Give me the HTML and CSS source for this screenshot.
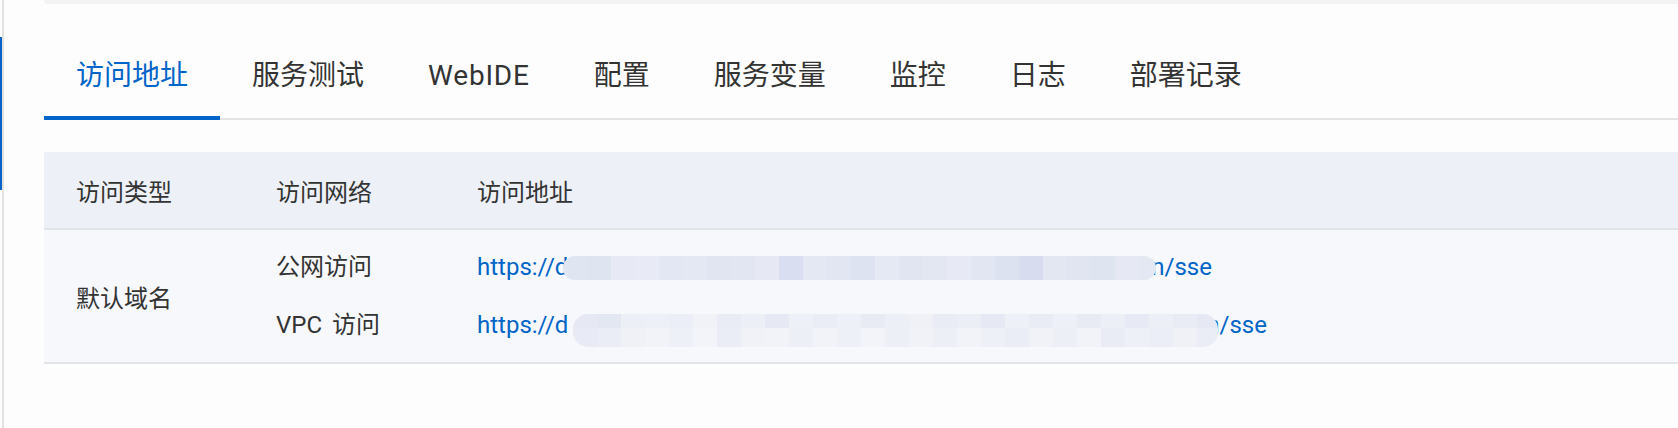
FILE: index.html
```html
<!DOCTYPE html>
<html lang="zh-CN">
<head>
<meta charset="utf-8">
<title>访问地址</title>
<link rel="stylesheet" href="styles.css">
</head>
<body>
<div class="page">
  <div class="rail"><div class="rail-indicator"></div></div>
  <div class="main">
    <div class="top-card"></div>
    <nav class="tabs">
      <div class="tab active">访问地址</div>
      <div class="tab">服务测试</div>
      <div class="tab tab-latin">WebIDE</div>
      <div class="tab">配置</div>
      <div class="tab">服务变量</div>
      <div class="tab">监控</div>
      <div class="tab">日志</div>
      <div class="tab">部署记录</div>
    </nav>
    <div class="table">
      <div class="row head">
        <div class="cell">访问类型</div>
        <div class="cell">访问网络</div>
        <div class="cell">访问地址</div>
      </div>
      <div class="row body">
        <div class="cell type">默认域名</div>
        <div class="cell lines">
          <div class="line">公网访问</div>
          <div class="line vpc">VPC 访问</div>
        </div>
        <div class="cell lines">
          <div class="line link">https://d<span class="mask mask-one"></span>n/sse</div>
          <div class="line link">https://d<span class="mask mask-two"></span>n/sse</div>
        </div>
      </div>
    </div>
  </div>
</div>
</body>
</html>
```

FILE: styles.css
```css
* { box-sizing: border-box; }
html, body {
  margin: 0;
  padding: 0;
  background: #fdfdfd;
  font-family: Roboto, "Noto Sans CJK SC", sans-serif;
  color: #333333;
}
.page {
  display: flex;
  min-height: 428px;
}
.rail {
  flex: none;
  width: 4px;
  border-right: 2px solid #e2e2e2;
}
.rail-indicator {
  margin-top: 37px;
  width: 2px;
  height: 153px;
  background: #0a64c8;
}
.main {
  flex: 1;
  min-width: 0;
  padding-left: 40px;
}
.top-card {
  height: 4px;
  background: #f3f3f4;
  border-bottom-left-radius: 4px;
}
.tabs {
  display: flex;
  margin-top: 52px;
  box-shadow: inset 0 -2px 0 #e4e4e6;
}
.tab {
  padding: 0 32px 20px;
  font-size: 28px;
  line-height: 40px;
  color: #333333;
  white-space: nowrap;
  border-bottom: 4px solid transparent;
}
.tab-latin { letter-spacing: 0.8px; }
.tab.active {
  color: #0064c8;
  border-bottom-color: #0064c8;
}
.table {
  margin-top: 32px;
  font-size: 24px;
}
.row {
  display: grid;
  grid-template-columns: 200px 201px 1fr;
  border-bottom: 2px solid #e3e4e7;
}
.row.head {
  height: 78px;
  background: #edf0f7;
}
.row.body {
  height: 134px;
  background: #f7f8fb;
}
.cell {
  display: flex;
  align-items: center;
  padding: 0 32px;
  white-space: nowrap;
}
.cell.lines {
  flex-direction: column;
  align-items: flex-start;
  justify-content: flex-start;
  padding-top: 19px;
  gap: 22px;
}
.line {
  display: flex;
  align-items: center;
  height: 36px;
  line-height: 36px;
}
.vpc { word-spacing: 4px; }
.link { color: #0064c8; }
.mask {
  position: relative;
  z-index: 1;
  flex: none;
  display: block;
}
.mask-one {
  width: 593px;
  height: 24px;
  margin: 2px -5px 0 -5px;
  border-radius: 12px;
  background: linear-gradient(to right,
    #e0e5f2 0 24px, #dfe4f1 24px 48px, #e7eaf4 48px 72px, #e8ebf5 72px 96px,
    #e3e7f3 96px 120px, #e4e8f3 120px 144px, #e1e5f2 144px 168px, #e2e6f2 168px 192px,
    #e6e9f4 192px 216px, #d9dff0 216px 240px, #e4e8f3 240px 264px, #e1e6f2 264px 288px,
    #dde3f1 288px 312px, #e5e9f3 312px 336px, #e0e5f1 336px 360px, #e3e7f2 360px 384px,
    #e7eaf4 384px 408px, #e2e6f2 408px 432px, #dde2f0 432px 456px, #d7ddee 456px 480px,
    #e3e7f2 480px 504px, #e0e5f1 504px 528px, #dfe4f1 528px 552px, #e6e9f4 552px 576px,
    #e4e8f3 576px 593px);
}
.mask-two {
  width: 645px;
  height: 33px;
  margin: 10px -12px 0 5px;
  border-radius: 15px;
  background:
    linear-gradient(to right,
      #e6e9f4 0 24px, #e3e7f2 24px 48px, #eceff6 48px 72px, #eef0f7 72px 96px,
      #ebeef6 96px 120px, #f0f2f8 120px 144px, #e9ecf5 144px 168px, #eceff6 168px 192px,
      #e6e9f4 192px 216px, #edf0f7 216px 240px, #eaedf5 240px 264px, #eef0f7 264px 288px,
      #e8ebf4 288px 312px, #eceff6 312px 336px, #f0f1f7 336px 360px, #e9ecf5 360px 384px,
      #eceef6 384px 408px, #e6e9f4 408px 432px, #edf0f7 432px 456px, #e9ecf5 456px 480px,
      #eef0f7 480px 504px, #e8ebf4 504px 528px, #eceff6 528px 552px, #e7eaf4 552px 576px,
      #eceff6 576px 600px, #e9ecf5 600px 624px, #e6e9f4 624px 645px) top / 100% 14px no-repeat,
    linear-gradient(to right,
      #e8ebf5 0 24px, #eaedf6 24px 48px, #eff1f7 48px 72px, #f2f3f8 72px 96px,
      #eef0f7 96px 120px, #f3f4f9 120px 144px, #eaedf5 144px 168px, #f0f2f8 168px 192px,
      #f2f3f8 192px 216px, #eceff6 216px 240px, #f1f3f8 240px 264px, #eef0f7 264px 288px,
      #f3f4f9 288px 312px, #edeff6 312px 336px, #f0f2f8 336px 360px, #eceff6 360px 384px,
      #f2f3f8 384px 408px, #eef0f7 408px 432px, #eaedf5 432px 456px, #f0f2f8 456px 480px,
      #eceff6 480px 504px, #f1f3f8 504px 528px, #e9ecf5 528px 552px, #eef0f7 552px 576px,
      #ebeef6 576px 600px, #eff1f7 600px 624px, #eaedf5 624px 645px) bottom / 100% 19px no-repeat;
}
```
